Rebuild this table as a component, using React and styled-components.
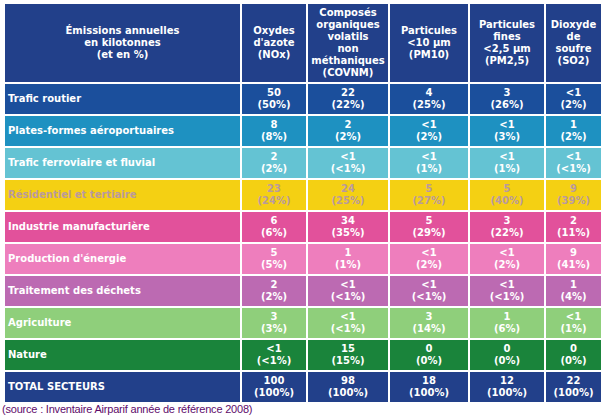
import React from "react";
import styled, { createGlobalStyle } from "styled-components";

const Global = createGlobalStyle`
  html, body { margin: 0; padding: 0; background: #ffffff; }
  body { font-family: "DejaVu Sans", Verdana, sans-serif; }
`;

const Wrap = styled.div`
  padding: 2px 0 0 3px;
`;

const Table = styled.table`
  border-collapse: separate;
  border-spacing: 2px;
  margin: 0;
  table-layout: fixed;
  width: 600px;
  background: #ffffff;
  font-family: "DejaVu Sans", Verdana, sans-serif;
  font-size: 10px;
  font-weight: bold;
  line-height: 12px;
  color: #ffffff;
`;

const Th = styled.th`
  box-sizing: border-box;
  width: ${(p) => p.$w}px;
  height: 78px;
  padding: 0 2px;
  background: #22408a;
  text-align: center;
  vertical-align: middle;
  font-weight: bold;
`;

const Row = styled.tr`
  background: ${(p) => p.$bg};
  color: ${(p) => p.$fg || "#ffffff"};
`;

const Label = styled.td`
  box-sizing: border-box;
  height: 30px;
  padding: 0 0 0 3px;
  text-align: left;
  vertical-align: middle;
  white-space: nowrap;
`;

const Val = styled.td`
  box-sizing: border-box;
  height: 30px;
  padding: 0;
  text-align: center;
  vertical-align: middle;
`;

const Source = styled.div`
  margin: -1px 0 0 -1px;
  font-family: "Liberation Sans", Arial, sans-serif;
  font-size: 11px;
  letter-spacing: -0.2px;
  line-height: 13px;
  color: #600a6a;
`;

const widths = [235, 64, 80, 78, 74, 55];

const headers = [
  ["Émissions annuelles", "en kilotonnes", "(et en %)"],
  ["Oxydes", "d'azote", "(NOx)"],
  ["Composés", "organiques", "volatils", "non", "méthaniques", "(COVNM)"],
  ["Particules", "<10 µm", "(PM10)"],
  ["Particules", "fines", "<2,5 µm", "(PM2,5)"],
  ["Dioxyde", "de", "soufre", "(SO2)"],
];

const rows = [
  { label: "Trafic routier", bg: "#1b4f9c", v: [["50", "50%"], ["22", "22%"], ["4", "25%"], ["3", "26%"], ["<1", "2%"]] },
  { label: "Plates-formes aéroportuaires", bg: "#1e91c1", v: [["8", "8%"], ["2", "2%"], ["<1", "2%"], ["<1", "3%"], ["1", "2%"]] },
  { label: "Trafic ferroviaire et fluvial", bg: "#64c3d3", v: [["2", "2%"], ["<1", "<1%"], ["<1", "1%"], ["<1", "1%"], ["<1", "<1%"]] },
  { label: "Résidentiel et tertiaire", bg: "#f4d013", fg: "#b99a9e", v: [["23", "24%"], ["24", "25%"], ["5", "27%"], ["5", "40%"], ["9", "39%"]] },
  { label: "Industrie manufacturière", bg: "#e2519b", v: [["6", "6%"], ["34", "35%"], ["5", "29%"], ["3", "22%"], ["2", "11%"]] },
  { label: "Production d'énergie", bg: "#ee7ebd", v: [["5", "5%"], ["1", "1%"], ["<1", "2%"], ["<1", "2%"], ["9", "41%"]] },
  { label: "Traitement des déchets", bg: "#bc6ab2", v: [["2", "2%"], ["<1", "<1%"], ["<1", "<1%"], ["<1", "<1%"], ["1", "4%"]] },
  { label: "Agriculture", bg: "#8fcf7b", v: [["3", "3%"], ["<1", "<1%"], ["3", "14%"], ["1", "6%"], ["<1", "1%"]] },
  { label: "Nature", bg: "#1a843b", v: [["<1", "<1%"], ["15", "15%"], ["0", "0%"], ["0", "0%"], ["0", "0%"]] },
  { label: "TOTAL SECTEURS", bg: "#22408a", v: [["100", "100%"], ["98", "100%"], ["18", "100%"], ["12", "100%"], ["22", "100%"]] },
];

const Lines = ({ lines }) =>
  lines.map((l, i) => (
    <React.Fragment key={i}>
      {i > 0 && <br />}
      {l}
    </React.Fragment>
  ));

export default function App() {
  return (
    <>
      <Global />
      <Wrap>
        <Table>
          <thead>
            <tr>
              {headers.map((h, i) => (
                <Th key={i} $w={widths[i]}>
                  <Lines lines={h} />
                </Th>
              ))}
            </tr>
          </thead>
          <tbody>
            {rows.map((r) => (
              <Row key={r.label} $bg={r.bg} $fg={r.fg}>
                <Label>{r.label}</Label>
                {r.v.map(([a, b], i) => (
                  <Val key={i}>
                    {a}
                    <br />({b})
                  </Val>
                ))}
              </Row>
            ))}
          </tbody>
        </Table>
        <Source>(source : Inventaire Airparif année de référence 2008)</Source>
      </Wrap>
    </>
  );
}
